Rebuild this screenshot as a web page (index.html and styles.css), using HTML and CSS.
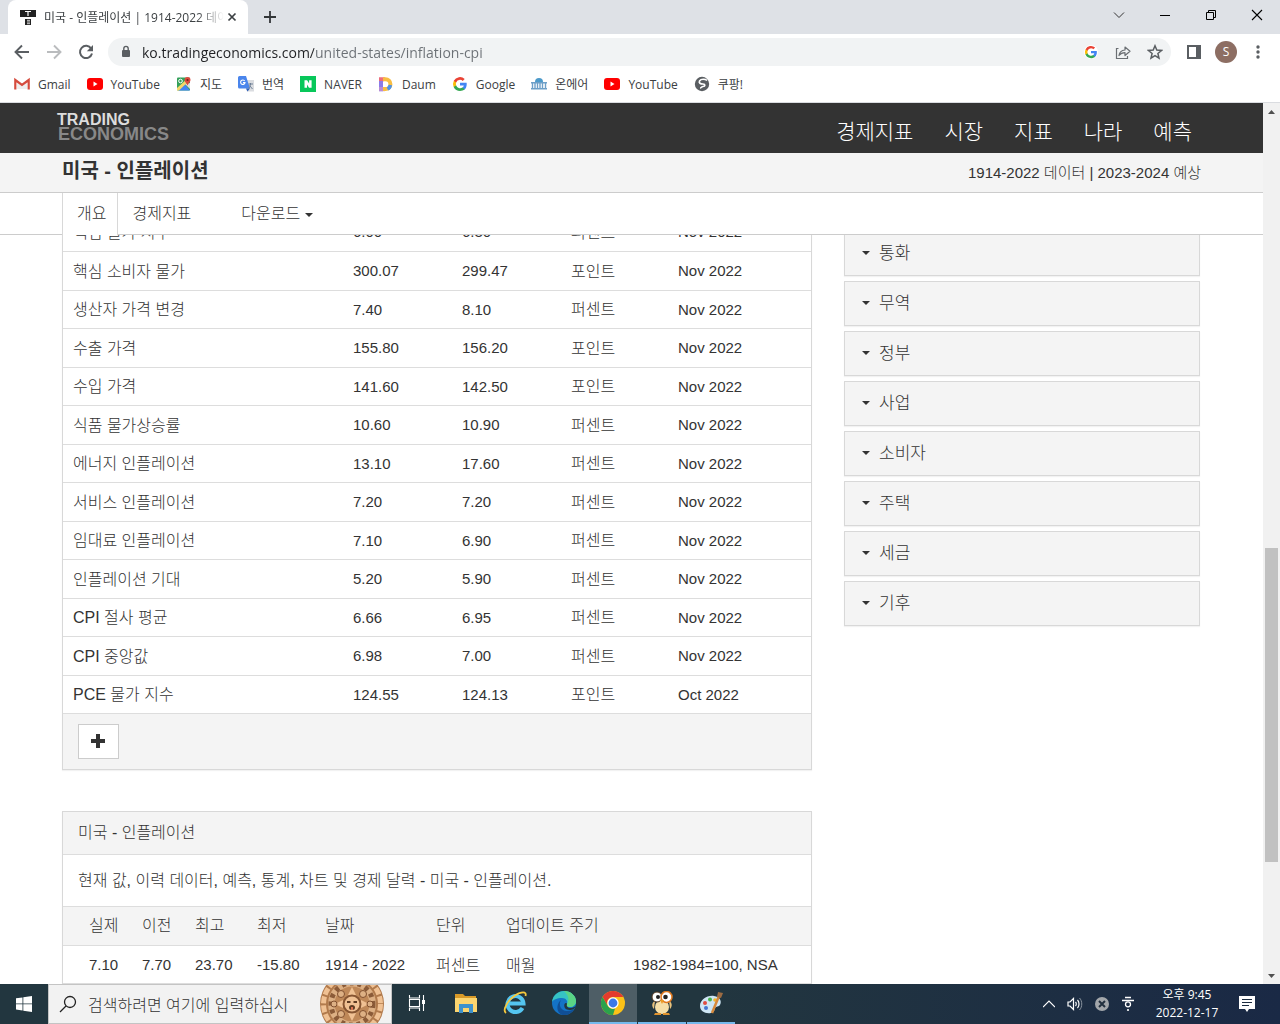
FILE: index.html
```html
<!DOCTYPE html>
<html lang="ko">
<head>
  <meta charset="UTF-8">
  <meta name="viewport" content="width=device-width, initial-scale=1.0">
  <title>미국 - 인플레이션 | 1914-2022 데이터</title>
  <link rel="stylesheet" href="styles.css">
</head>
<body>
  <!-- Shared icons -->
  <svg class="sprite" width="0" height="0">
    <symbol id="google" viewBox="0 0 16 16">
      <path d="M14.7 8.2c0-.5 0-1-.1-1.4H8v2.7h3.8a3.2 3.2 0 0 1-1.4 2.1v1.8h2.3c1.300-1.200 2-3 2-5.200z" fill="#4285f4"/>
      <path d="M8 15c1.900 0 3.500-.6 4.700-1.700l-2.300-1.800a4.200 4.200 0 0 1-6.300-2.200H1.800v1.900A7 7 0 0 0 8 15z" fill="#34a853"/>
      <path d="M4.100 9.300a4.200 4.200 0 0 1 0-2.700V4.800H1.800a7 7 0 0 0 0 6.300z" fill="#fbbc05"/>
      <path d="M8 3.800c1.100 0 2 .4 2.700 1.100l2-2A7 7 0 0 0 1.800 4.800l2.300 1.800A4.200 4.200 0 0 1 8 3.800z" fill="#ea4335"/>
    </symbol>
    <symbol id="youtube" viewBox="0 0 16 16">
      <rect x="0" y="2" width="16" height="12" rx="3" fill="#f00"/>
      <path d="M6.500 5.500v5l4-2.500z" fill="#fff"/>
    </symbol>
  </svg>

  <!-- Tab strip -->
  <div class="tab-strip">
    <div class="tab">
      <svg width="16" height="16" viewBox="0 0 16 16">
        <path d="M0 1h16v7H0zM5 10h6v6H5z" fill="#222"/>
        <path d="M5 2.500h6M8 2.500V7" stroke="#fff" stroke-width="1.200"/>
        <path d="M7 11.300h3M7 13h3M7 14.700h3" stroke="#fff" stroke-width=".8"/>
      </svg>
      <span class="tab-title">미국 - 인플레이션 | 1914-2022 데이터</span>
      <button class="tab-close" aria-label="탭 닫기">
        <svg width="16" height="16" viewBox="0 0 16 16"><path d="M4.500 4.500l7 7M11.500 4.500l-7 7" stroke="#3c4043" stroke-width="1.700"/></svg>
      </button>
    </div>
    <button class="new-tab" aria-label="새 탭">
      <svg width="16" height="16" viewBox="0 0 16 16"><path d="M8 2v12M2 8h12" stroke="#333639" stroke-width="1.800"/></svg>
    </button>
    <div class="window-buttons">
      <button aria-label="탭 검색"><svg width="12" height="12" viewBox="0 0 12 12"><path d="M1 3.500l5 5 5-5" fill="none" stroke="#333"/></svg></button>
      <button aria-label="최소화"><svg width="10" height="12" viewBox="0 0 10 12"><path d="M0 6.500h10" stroke="#000"/></svg></button>
      <button aria-label="이전 크기로"><svg width="12" height="12" viewBox="0 0 12 12"><path d="M1.500 3.500h7v7h-7zM3.500 3.500v-2h7v7h-2" fill="none" stroke="#000"/></svg></button>
      <button aria-label="닫기"><svg width="12" height="12" viewBox="0 0 12 12"><path d="M1 1l10 10M11 1L1 11" stroke="#000" stroke-width="1.100"/></svg></button>
    </div>
  </div>

  <!-- Toolbar -->
  <div class="toolbar">
    <button aria-label="뒤로"><svg width="16" height="16" viewBox="0 0 16 16"><path d="M15 8H2.500M8 1.500L1.500 8 8 14.500" fill="none" stroke="#5a5e62" stroke-width="1.900"/></svg></button>
    <button aria-label="앞으로"><svg width="16" height="16" viewBox="0 0 16 16"><path d="M1 8h12.500M8 1.500L14.500 8 8 14.500" fill="none" stroke="#babcbe" stroke-width="1.900"/></svg></button>
    <button aria-label="새로고침"><svg width="16" height="16" viewBox="0 0 16 16"><path d="M13.200 4.600A6.100 6.100 0 1 0 14 9.500" fill="none" stroke="#5a5e62" stroke-width="2"/><path d="M15 1v6.200H8.800z" fill="#5a5e62"/></svg></button>
    <div class="address-bar">
      <svg class="lock" width="12" height="14" viewBox="0 0 12 14"><rect x="2" y="5" width="8" height="7" rx="1" fill="#5a5e62"/><path d="M3.800 5.500V3.600a2.200 2.200 0 0 1 4.400 0v2" fill="none" stroke="#5a5e62" stroke-width="1.400"/></svg>
      <input class="url" type="text" aria-label="주소" value="ko.tradingeconomics.com/united-states/inflation-cpi">
      <button aria-label="Google"><svg class="g-badge" width="14" height="14"><use href="#google"/></svg></button>
      <button aria-label="공유"><svg width="16" height="16" viewBox="0 0 16 16"><path d="M3.500 4.500h-2v10h11v-2.500" fill="none" stroke="#6b6f73" stroke-width="1.200"/><path d="M4 11.500c.5-3.500 2.500-5.300 6-5.500V3l5 4.300-5 4.200V8.700c-2.800 0-4.600.9-6 2.800z" fill="none" stroke="#6b6f73" stroke-width="1.200" stroke-linejoin="round"/></svg></button>
      <button aria-label="북마크"><svg width="16" height="16" viewBox="0 0 16 16"><path d="M8 1.800l1.800 4.300 4.700.4-3.600 3 1.100 4.600L8 11.600l-4 2.500 1.100-4.600-3.600-3 4.700-.4z" fill="none" stroke="#5a5e62" stroke-width="1.500"/></svg></button>
    </div>
    <button aria-label="측면 패널"><svg width="14" height="14" viewBox="0 0 14 14"><path d="M0 0h14v14H0zM2 2v10h7V2z" fill="#5a5e62" fill-rule="evenodd"/></svg></button>
    <button aria-label="프로필"><span class="avatar">S</span></button>
    <button aria-label="메뉴"><svg width="4" height="14" viewBox="0 0 4 14"><circle cx="2" cy="2" r="1.700" fill="#5a5e62"/><circle cx="2" cy="7" r="1.700" fill="#5a5e62"/><circle cx="2" cy="12" r="1.700" fill="#5a5e62"/></svg></button>
  </div>

  <!-- Bookmarks -->
  <nav class="bookmarks">
    <a href="#"><svg width="16" height="16" viewBox="0 0 16 16"><path d="M3 5l5 4 5-4v8H3z" fill="#eee"/><path d="M1.300 13.500V4L8 9l6.700-5v9.500" fill="none" stroke="#d54b3d" stroke-width="2.200"/></svg>Gmail</a>
    <a href="#"><svg width="16" height="16"><use href="#youtube"/></svg>YouTube</a>
    <a href="#"><svg width="16" height="16" viewBox="0 0 16 16"><rect x="1" y="1.500" width="13" height="13" rx="1" fill="#34a05a"/><path d="M2 14.500l7-6 5 6z" fill="#4285f4"/><path d="M1 12L12 2l2 2L3 14.500H1z" fill="#f5d76a"/><path d="M9 8l5 5V7z" fill="#ddd"/><path d="M11.500 9.500C10.500 7 8.500 6 8.500 4a3 3 0 0 1 6 0c0 2-2 3-3 5.500z" fill="#dd4b3e"/><circle cx="11.500" cy="4" r="1.100" fill="#7c1f17"/><circle cx="4.500" cy="5" r="1.800" fill="none" stroke="#fff"/></svg>지도</a>
    <a href="#"><svg width="16" height="16" viewBox="0 0 16 16"><path d="M6 4h10v11.500H9z" fill="#dadce0"/><path d="M0 1.500A1.500 1.500 0 0 1 1.500 0H8l4 12.500H1.500A1.500 1.500 0 0 1 0 11z" fill="#4a85ec"/><path d="M8 12.500h4L9.500 15.500z" fill="#2a5db8"/><path d="M6.700 5A2.200 2.200 0 1 0 7 6.600H5" fill="none" stroke="#fff" stroke-width="1.100"/><path d="M10.500 8h4.500M12.500 7v1c0 2-1 3.500-2 4.500M11.500 9.500l3 3.500" fill="none" stroke="#6e8096"/></svg>번역</a>
    <a href="#"><svg width="16" height="16" viewBox="0 0 16 16"><path d="M0 0h16v16H0z" fill="#08c75a"/><path d="M4.500 4.300h2.600l2 3.200V4.300h2.500v7.500H9L7 8.600v3.200H4.500z" fill="#fff"/></svg>NAVER</a>
    <a href="#"><svg width="16" height="16" viewBox="0 0 16 16"><path d="M1 1.200h6L5 6H1z" fill="#ec6c7c"/><path d="M1 5h4v10.200H1z" fill="#8b7be8"/><path d="M1 11h6v4.200H1z" fill="#b78bd4"/><path d="M5 3.200h2.500a4.900 4.900 0 0 1 0 9.900H5" fill="none" stroke="#f8bd42" stroke-width="4"/><path d="M9.500 13a5 5 0 0 0 2.800-4" fill="none" stroke="#4c92e8" stroke-width="3.500"/></svg>Daum</a>
    <a href="#"><svg width="16" height="16"><use href="#google"/></svg>Google</a>
    <a href="#"><svg width="16" height="16" viewBox="0 0 16 16"><path d="M4 6a4 4 0 0 1 8 0z" fill="#4d9aca"/><path d="M0 6h16v1.500H0zM0 12h16v1.500H0z" fill="#6d9fc8"/><path d="M1.500 7v5M4 7v5M6.500 7v5M9 7v5M11.500 7v5M14.500 7v5" stroke="#6d9fc8" stroke-width="1.400"/></svg>온에어</a>
    <a href="#"><svg width="16" height="16"><use href="#youtube"/></svg>YouTube</a>
    <a href="#"><svg width="16" height="16" viewBox="0 0 16 16"><circle cx="8" cy="8" r="7.200" fill="#5a5e62"/><path d="M13 4.500C11.500 3 7 2.500 5.500 5c-1 2 1 3 3.500 3s2.500 2.500 0 2.500c-1.500 0-1.500 1.500-3 1.500" fill="none" stroke="#fff" stroke-width="1.600"/></svg>쿠팡!</a>
  </nav>

  <div class="viewport">
    <div class="page">
      <header class="site-header">
        <a class="logo" href="#"><span>TRADING</span><span>ECONOMICS</span></a>
        <nav class="main-nav">
          <a href="#">경제지표</a>
          <a href="#">시장</a>
          <a href="#">지표</a>
          <a href="#">나라</a>
          <a href="#">예측</a>
        </nav>
      </header>

      <div class="title-bar">
        <h1>미국 - 인플레이션</h1>
        <span>1914-2022 데이터 | 2023-2024 예상</span>
      </div>

      <nav class="sub-nav">
        <a class="active" href="#">개요</a>
        <a href="#">경제지표</a>
        <a class="download" href="#">다운로드 <i class="caret"></i></a>
      </nav>

      <div class="content">
        <div class="columns">
          <main class="main-column">
            <section class="panel">
              <table class="indicators">
                <tbody>
                  <tr><td>핵심 물가 지수</td><td>6.00</td><td>6.30</td><td>퍼센트</td><td>Nov 2022</td></tr>
                  <tr><td>핵심 소비자 물가</td><td>300.07</td><td>299.47</td><td>포인트</td><td>Nov 2022</td></tr>
                  <tr><td>생산자 가격 변경</td><td>7.40</td><td>8.10</td><td>퍼센트</td><td>Nov 2022</td></tr>
                  <tr><td>수출 가격</td><td>155.80</td><td>156.20</td><td>포인트</td><td>Nov 2022</td></tr>
                  <tr><td>수입 가격</td><td>141.60</td><td>142.50</td><td>포인트</td><td>Nov 2022</td></tr>
                  <tr><td>식품 물가상승률</td><td>10.60</td><td>10.90</td><td>퍼센트</td><td>Nov 2022</td></tr>
                  <tr><td>에너지 인플레이션</td><td>13.10</td><td>17.60</td><td>퍼센트</td><td>Nov 2022</td></tr>
                  <tr><td>서비스 인플레이션</td><td>7.20</td><td>7.20</td><td>퍼센트</td><td>Nov 2022</td></tr>
                  <tr><td>임대료 인플레이션</td><td>7.10</td><td>6.90</td><td>퍼센트</td><td>Nov 2022</td></tr>
                  <tr><td>인플레이션 기대</td><td>5.20</td><td>5.90</td><td>퍼센트</td><td>Nov 2022</td></tr>
                  <tr><td>CPI 절사 평균</td><td>6.66</td><td>6.95</td><td>퍼센트</td><td>Nov 2022</td></tr>
                  <tr><td>CPI 중앙값</td><td>6.98</td><td>7.00</td><td>퍼센트</td><td>Nov 2022</td></tr>
                  <tr><td>PCE 물가 지수</td><td>124.55</td><td>124.13</td><td>포인트</td><td>Oct 2022</td></tr>
                </tbody>
              </table>
              <div class="panel-footer">
                <button class="more" aria-label="더 보기">
                  <svg width="15" height="15" viewBox="0 0 15 15"><path d="M7 0v14M0 7h14" stroke="#333" stroke-width="4"/></svg>
                </button>
              </div>
            </section>

            <section class="panel">
              <h2>미국 - 인플레이션</h2>
              <p>현재 값, 이력 데이터, 예측, 통계, 차트 및 경제 달력 - 미국 - 인플레이션.</p>
              <table class="summary">
                <thead>
                  <tr><th>실제</th><th>이전</th><th>최고</th><th>최저</th><th>날짜</th><th>단위</th><th>업데이트 주기</th><th></th></tr>
                </thead>
                <tbody>
                  <tr><td>7.10</td><td>7.70</td><td>23.70</td><td>-15.80</td><td>1914 - 2022</td><td class="ko">퍼센트</td><td class="ko">매월</td><td>1982-1984=100, NSA</td></tr>
                </tbody>
              </table>
            </section>
          </main>

          <aside class="sidebar">
            <button><i class="caret"></i>통화</button>
            <button><i class="caret"></i>무역</button>
            <button><i class="caret"></i>정부</button>
            <button><i class="caret"></i>사업</button>
            <button><i class="caret"></i>소비자</button>
            <button><i class="caret"></i>주택</button>
            <button><i class="caret"></i>세금</button>
            <button><i class="caret"></i>기후</button>
          </aside>
        </div>
      </div>
    </div>

    <div class="scrollbar">
      <svg width="17" height="17" viewBox="0 0 17 17"><path d="M5 11h7L8.500 7z" fill="#505050"/></svg>
      <div class="track"><div class="thumb"></div></div>
      <svg width="17" height="17" viewBox="0 0 17 17"><path d="M5 7h7l-3.500 4z" fill="#505050"/></svg>
    </div>
  </div>

  <!-- Taskbar -->
  <footer class="taskbar">
    <button class="start" aria-label="시작"><svg width="16" height="16" viewBox="0 0 16 16"><path d="M0 2.300l6.500-.9v6.100H0zM7.300 1.300L16 0v7.500H7.300zM0 8.300h6.500v6.100L0 13.500zM7.300 8.300H16V16l-8.700-1.300z" fill="#fff"/></svg></button>
    <div class="search">
      <svg width="18" height="18" viewBox="0 0 18 18"><circle cx="11" cy="7" r="5.500" fill="none" stroke="#222" stroke-width="1.300"/><path d="M7 11l-6 6" stroke="#222" stroke-width="1.300"/></svg>
      <input type="text" aria-label="검색" placeholder="검색하려면 여기에 입력하십시">
      <svg width="64" height="38" viewBox="0 0 64 38">
        <circle cx="32" cy="19" r="32" fill="#b17a4c"/>
        <circle cx="32" cy="19" r="28.500" fill="none" stroke="#f0c193" stroke-width="5" stroke-dasharray="7 2"/>
        <circle cx="32" cy="19" r="24" fill="#ddb084"/>
        <circle cx="32" cy="19" r="21" fill="none" stroke="#8b5b38" stroke-width="5" stroke-dasharray="4 4"/>
        <circle cx="32" cy="19" r="17.500" fill="#bf8858"/>
        <path d="M32 2l4 8h-8zM32 36l4-8h-8zM15 19l8-4v8zM49 19l-8-4v8z" fill="#f0c193"/>
        <g fill="#ddb084" stroke="#81502f"><circle cx="21" cy="9" r="3.500"/><circle cx="43" cy="9" r="3.500"/><circle cx="21" cy="29" r="3.500"/><circle cx="43" cy="29" r="3.500"/><circle cx="14" cy="19" r="3"/><circle cx="50" cy="19" r="3"/></g>
        <circle cx="32" cy="19" r="9.500" fill="#865532"/>
        <circle cx="32" cy="19" r="7.500" fill="#f0c193"/>
        <path d="M27 16h3.500v2H27zM33.500 16H37v2h-3.500z" fill="#5d3a22"/>
        <ellipse cx="32" cy="22.500" rx="3" ry="2.500" fill="#5d3a22"/>
        <path d="M31 22h2v3h-2z" fill="#d97250"/>
      </svg>
    </div>
    <div class="apps">
      <button aria-label="작업 보기"><svg width="18" height="18" viewBox="0 0 18 18"><path d="M1.500 1v3h10V1M1.500 17v-3h10v3M1.500 5.500h10v7h-10zM15.500 1v16" fill="none" stroke="#fff" stroke-width="1.100"/><path d="M14 6h3v4h-3z" fill="#fff"/></svg></button>
      <button aria-label="파일 탐색기"><svg width="24" height="24" viewBox="0 0 24 24"><path d="M1 3h8l2 2h11v4H1z" fill="#d99a28"/><path d="M1 7h22v14H1z" fill="#fcd56f"/><path d="M5 13h14v9h-4v-5H9v5H5z" fill="#3e92cd"/></svg></button>
      <button aria-label="Internet Explorer"><svg width="24" height="24" viewBox="0 0 24 24"><path d="M19.500 17a8 8 0 1 1 1-4.500H6" fill="none" stroke="#54c5f0" stroke-width="4"/><path d="M3 22c-4-3 2-13 9-17.500C18 .5 24 0 22.500 5" fill="none" stroke="#f6c93d" stroke-width="1.800"/></svg></button>
      <button aria-label="Edge"><svg width="24" height="24" viewBox="0 0 24 24"><circle cx="12" cy="12" r="12" fill="#1473c6"/><path d="M0 11C1 4 6 0 12 0c7 0 12 5 12 10 0 4-3 6-6 6-3 0-4-1-3-3 1-3-1-6-5-6-5 0-9 2-10 4z" fill="#36c3c4"/><path d="M12 0c7 0 12 5 12 10 0 4-3 6-6 6-3 0-4-1-3-3 3-5 1-9-3-13z" fill="#5ad485"/><path d="M9 9c-3 5 0 11 6 11 3 0 5-1 7-2-2 4-6 6-10 6C5 24 3 14 9 9z" fill="#104f96"/><path d="M15 13c-1 2 1 4 3 4 2 0 4-.5 5.500-2-.5 3-3 4-6 4-4 0-6-3-5-6 .5-1.500 2.500-1.500 2.500 0z" fill="#22363f"/></svg></button>
      <button class="running current" aria-label="Chrome"><svg width="24" height="24" viewBox="0 0 24 24"><circle cx="12" cy="12" r="12" fill="#fbc117"/><path d="M1.600 6A12 12 0 0 1 22.400 6H12a6 6 0 0 0-5.200 9z" fill="#e33b2e"/><path d="M1.600 6l5.200 9A6 6 0 0 0 14 17.600L12 24A12 12 0 0 1 1.600 6z" fill="#2ba24c"/><circle cx="12" cy="12" r="5.700" fill="#fff"/><circle cx="12" cy="12" r="4.400" fill="#3b78e7"/></svg></button>
      <button class="running" aria-label="뷰어"><svg width="24" height="24" viewBox="0 0 24 24"><path d="M5 10c-4 2-3 6-1 8zM19 10c4 2 3 6 1 8z" fill="#e9c27d"/><ellipse cx="12" cy="16" rx="7" ry="7" fill="#f6dfa8"/><path d="M5 22h6v2H4zM13 22h6l1 2h-7z" fill="#e0942f"/><circle cx="7" cy="6" r="5" fill="#fff" stroke="#51361d"/><circle cx="16.500" cy="6" r="5.500" fill="#fff" stroke="#e17a20" stroke-width="1.500"/><circle cx="8" cy="6" r="2" fill="#222"/><circle cx="15.500" cy="6" r="2.300" fill="#222"/><path d="M10 9h4l-2 4z" fill="#ed9c26"/></svg></button>
      <button class="running" aria-label="그림판"><svg width="24" height="24" viewBox="0 0 24 24"><path d="M1 15C1 9 8 4 15 5c6 1 8 5 6 9-1 2-4 1-5 3s0 4-4 5C6 23 1 20 1 15z" fill="#cfe6f4"/><circle cx="6" cy="12" r="2" fill="#e04d40"/><circle cx="11" cy="8.500" r="2" fill="#48b14c"/><circle cx="7" cy="17" r="2" fill="#4477d0"/><circle cx="16" cy="9" r="1.800" fill="#f1b62c"/><path d="M13 22L20 5" stroke="#d6883a" stroke-width="2.500"/><path d="M18 6l1-5 5 1-2 5z" fill="#9c6b42"/></svg></button>
    </div>
    <div class="tray">
      <svg width="12" height="12" viewBox="0 0 12 12"><path d="M0 9l6-6 6 6" fill="none" stroke="#fff" stroke-width="1.200"/></svg>
      <svg width="16" height="14" viewBox="0 0 16 14"><path d="M1 5h2l3.500-3.500v11L3 9H1zM8.500 5c1 1 1 3 0 4M10.500 3c2 2 2 6 0 8" fill="none" stroke="#fff" stroke-width="1.200"/><path d="M12.500 1c3 3 3 9 0 12" fill="none" stroke="#8a949f"/></svg>
      <svg width="14" height="14" viewBox="0 0 14 14"><circle cx="7" cy="7" r="7" fill="#a3a7ab"/><path d="M4 4l6 6M10 4l-6 6" stroke="#22303f" stroke-width="2"/></svg>
      <svg width="14" height="16" viewBox="0 0 14 16"><path d="M4 1.500h6M1 4.500h12" stroke="#fff" stroke-width="1.300"/><circle cx="7" cy="8.300" r="2.500" fill="none" stroke="#fff" stroke-width="1.300"/><circle cx="7" cy="14" r="1.100" fill="#fff"/></svg>
      <div class="clock"><span>오후 9:45</span><span>2022-12-17</span></div>
      <svg width="16" height="16" viewBox="0 0 16 16"><path d="M0 0h16v13h-6l-2 3-2-3H0z" fill="#fff"/><path d="M3 3.500h10M3 6.500h10M3 9.500h7" stroke="#1b2b3f"/></svg>
    </div>
  </footer>
</body>
</html>
```
FILE: styles.css
```css
* {
  box-sizing: border-box;
}

body {
  margin: 0;
  height: 100vh;
  display: flex;
  flex-direction: column;
  overflow: hidden;
  font-family: "Liberation Sans", "Noto Sans CJK KR", sans-serif;
  font-size: 15px;
  font-weight: 300;
  color: #333;
  background-color: #fff;
}

a {
  color: inherit;
  text-decoration: none;
}

button {
  padding: 0;
  border: none;
  background: none;
  font: inherit;
  color: inherit;
}

svg {
  display: block;
  flex: none;
}

.sprite {
  position: absolute;
}

.tab-strip,
.toolbar,
.bookmarks {
  flex: none;
  display: flex;
  align-items: center;
  height: 34px;
  font-family: "Open Sans", "Noto Sans CJK KR", sans-serif;
  font-size: 12px;
  font-weight: 400;
  color: #3c4043;
}

/* Tab strip */
.tab-strip {
  background-color: #dee1e6;
  padding-left: 8px;
}

.tab {
  display: flex;
  align-items: center;
  width: 240px;
  height: 34px;
  padding: 0 8px 0 12px;
  border-radius: 8px 8px 0 0;
  background-color: #fff;
}

.tab-title {
  flex: 1;
  margin-left: 8px;
  overflow: hidden;
  white-space: nowrap;
  -webkit-mask-image: linear-gradient(to right, #000 85%, transparent);
  mask-image: linear-gradient(to right, #000 85%, transparent);
}

.new-tab {
  margin-left: 14px;
}

.window-buttons {
  display: flex;
  margin-left: auto;
}

.window-buttons button {
  display: flex;
  justify-content: center;
  width: 46px;
  padding-bottom: 4px;
}

/* Toolbar */
.toolbar {
  height: 36px;
  padding: 0 6px;
}

.toolbar button {
  display: flex;
  justify-content: center;
  flex: none;
  width: 32px;
}

.address-bar {
  flex: 1;
  display: flex;
  align-items: center;
  height: 28px;
  margin: 0 7px 0 6px;
  padding-left: 12px;
  border-radius: 14px;
  background-color: #f1f3f4;
}

.url {
  flex: 1;
  min-width: 0;
  margin-left: 10px;
  padding: 0;
  border: none;
  outline: none;
  font-family: "Open Sans", sans-serif;
  font-size: 14px;
  color: transparent;
  background: linear-gradient(to right, #202124 172px, #6b7075 172px);
  -webkit-background-clip: text;
  background-clip: text;
}

.avatar {
  width: 22px;
  height: 22px;
  border-radius: 50%;
  line-height: 22px;
  text-align: center;
  color: #fff;
  background-color: #8d6e63;
}

.g-badge {
  border-radius: 50%;
  background-color: #fff;
}

/* Bookmarks */
.bookmarks {
  height: 33px;
  gap: 16px;
  padding: 0 14px 4px;
  border-bottom: 1px solid #dadce0;
}

.bookmarks a {
  display: flex;
  align-items: center;
  gap: 8px;
}

/* Page */
.viewport {
  flex: 1;
  min-height: 0;
  display: flex;
}

.page {
  flex: 1;
  min-width: 0;
  display: flex;
  flex-direction: column;
}

.site-header {
  flex: none;
  display: flex;
  justify-content: space-between;
  height: 50px;
  padding: 0 71px 0 57px;
  background-color: #333;
}

.logo {
  display: flex;
  flex-direction: column;
  padding-top: 10px;
  font-size: 16px;
  font-weight: bold;
  line-height: 14px;
  color: #ddd;
}

.logo span + span {
  padding-left: 1px;
  font-size: 18px;
  color: #888;
}

.main-nav {
  display: flex;
  align-items: center;
  gap: 31px;
  padding-top: 4px;
  font-size: 21px;
  color: #fff;
}

.title-bar {
  flex: none;
  display: flex;
  justify-content: space-between;
  align-items: center;
  height: 40px;
  padding: 0 62px 2px;
  border-bottom: 1px solid #ccc;
  background-color: #f4f4f4;
}

.title-bar h1 {
  margin: 0;
  padding-bottom: 4px;
  font-size: 20px;
  font-weight: bold;
}

.sub-nav {
  position: relative;
  flex: none;
  display: flex;
  height: 42px;
  padding: 0 62px;
  border-bottom: 1px solid #ccc;
  font-size: 16px;
  line-height: 41px;
  background-color: #fff;
}

.sub-nav a {
  padding: 0 14px;
}

.sub-nav .active {
  height: 42px;
  padding-right: 11px;
  border: 1px solid #d8d8d8;
  border-width: 0 1px;
  background-color: #fff;
}

.sub-nav .download {
  margin-left: 22px;
}

.caret {
  display: inline-block;
  border-top: 4px solid #333;
  border-left: 4px solid transparent;
  border-right: 4px solid transparent;
  vertical-align: middle;
}

/* Content */
.content {
  flex: 1;
  min-height: 0;
  overflow: hidden;
  padding: 0 63px 0 62px;
}

.columns {
  display: flex;
  align-items: flex-start;
  gap: 32px;
  margin-top: -23px;
}

.main-column {
  flex: 1;
}

.panel {
  margin-bottom: 41px;
  border: 1px solid #d8d8d8;
  box-shadow: 0 1px 1px rgba(0, 0, 0, 0.05);
}

table {
  width: 100%;
  table-layout: fixed;
  border-collapse: collapse;
}

td,
th {
  height: 38px;
  padding: 0 0 0 10px;
  border-bottom: 1px solid #ddd;
  text-align: left;
  font-weight: inherit;
  white-space: nowrap;
}

.indicators tr:nth-child(even) td {
  height: 39px;
}

.indicators td:nth-child(1) {
  width: 280px;
  padding-bottom: 2px;
  font-size: 16px;
}

.indicators td:nth-child(2),
.indicators td:nth-child(3) {
  width: 109px;
}

.indicators td:nth-child(4) {
  width: 107px;
  padding-bottom: 2px;
  font-size: 16px;
}

.panel-footer {
  padding: 10px 15px;
  background-color: #f4f4f4;
}

.more {
  display: flex;
  justify-content: center;
  align-items: center;
  width: 41px;
  height: 35px;
  border: 1px solid #ccc;
  background-color: #fff;
}

.panel h2 {
  margin: 0;
  padding: 0 15px;
  border-bottom: 1px solid #ddd;
  font-size: 16px;
  font-weight: inherit;
  line-height: 42px;
  background-color: #f4f4f4;
}

.panel p {
  margin: 0;
  padding: 0 15px;
  border-bottom: 1px solid #ddd;
  font-size: 16px;
  line-height: 51px;
}

.summary th {
  height: 39px;
  padding-bottom: 4px;
  font-size: 16px;
  background-color: #f4f4f4;
}

.summary .ko {
  padding-bottom: 2px;
  font-size: 16px;
}

.summary th:nth-child(1) {
  width: 69px;
}

.summary th:nth-child(1),
.summary td:nth-child(1) {
  padding-left: 26px;
}

.summary th:nth-child(2) {
  width: 53px;
}

.summary th:nth-child(3) {
  width: 62px;
}

.summary th:nth-child(4) {
  width: 68px;
}

.summary th:nth-child(5) {
  width: 111px;
}

.summary th:nth-child(6) {
  width: 70px;
}

.summary th:nth-child(7) {
  width: 127px;
}

/* Sidebar */
.sidebar {
  display: flex;
  flex-direction: column;
  gap: 5px;
  width: 356px;
  padding-top: 19px;
}

.sidebar button {
  display: flex;
  align-items: center;
  gap: 9px;
  height: 45px;
  padding: 0 17px 4px;
  border: 1px solid #d8d8d8;
  box-shadow: 0 1px 1px rgba(0, 0, 0, 0.05);
  font-size: 17px;
  background-color: #f4f4f4;
}

.sidebar .caret {
  margin-top: 3px;
}

/* Scrollbar */
.scrollbar {
  display: flex;
  flex-direction: column;
  width: 17px;
  background-color: #f1f1f1;
}

.track {
  flex: 1;
  display: flex;
  flex-direction: column;
  justify-content: flex-end;
  padding: 0 2px 105px;
}

.thumb {
  height: 314px;
  background-color: #c1c1c1;
}

/* Taskbar */
.taskbar {
  flex: none;
  display: flex;
  height: 40px;
  color: #fff;
  background: linear-gradient(to right, #22363f 55%, #1a2945);
}

.start {
  display: flex;
  justify-content: center;
  align-items: center;
  width: 48px;
}

.search {
  display: flex;
  align-items: center;
  width: 344px;
  padding: 0 7px 0 10px;
  border: 1px solid #c4c4c4;
  background-color: #f2f2f2;
}

.search input {
  flex: 1;
  min-width: 0;
  margin-left: 11px;
  padding: 0;
  border: none;
  outline: none;
  font-family: "Noto Sans CJK KR", sans-serif;
  font-size: 16px;
  font-weight: 300;
  background: none;
}

.search input::placeholder {
  color: #333;
}

.apps {
  display: flex;
  gap: 1px;
  margin-left: 1px;
}

.apps button {
  display: flex;
  justify-content: center;
  align-items: center;
  width: 48px;
  border-bottom: 2px solid transparent;
}

.apps .running {
  border-bottom-color: #76b9ed;
}

.apps .current {
  background-color: #4e5e66;
}

.tray {
  display: flex;
  align-items: center;
  gap: 12px;
  margin-left: auto;
  padding-right: 25px;
}

.clock {
  display: flex;
  flex-direction: column;
  width: 80px;
  font-family: "Open Sans", "Noto Sans CJK KR", sans-serif;
  font-size: 12px;
  font-weight: 400;
  line-height: 18px;
  text-align: center;
}
```
